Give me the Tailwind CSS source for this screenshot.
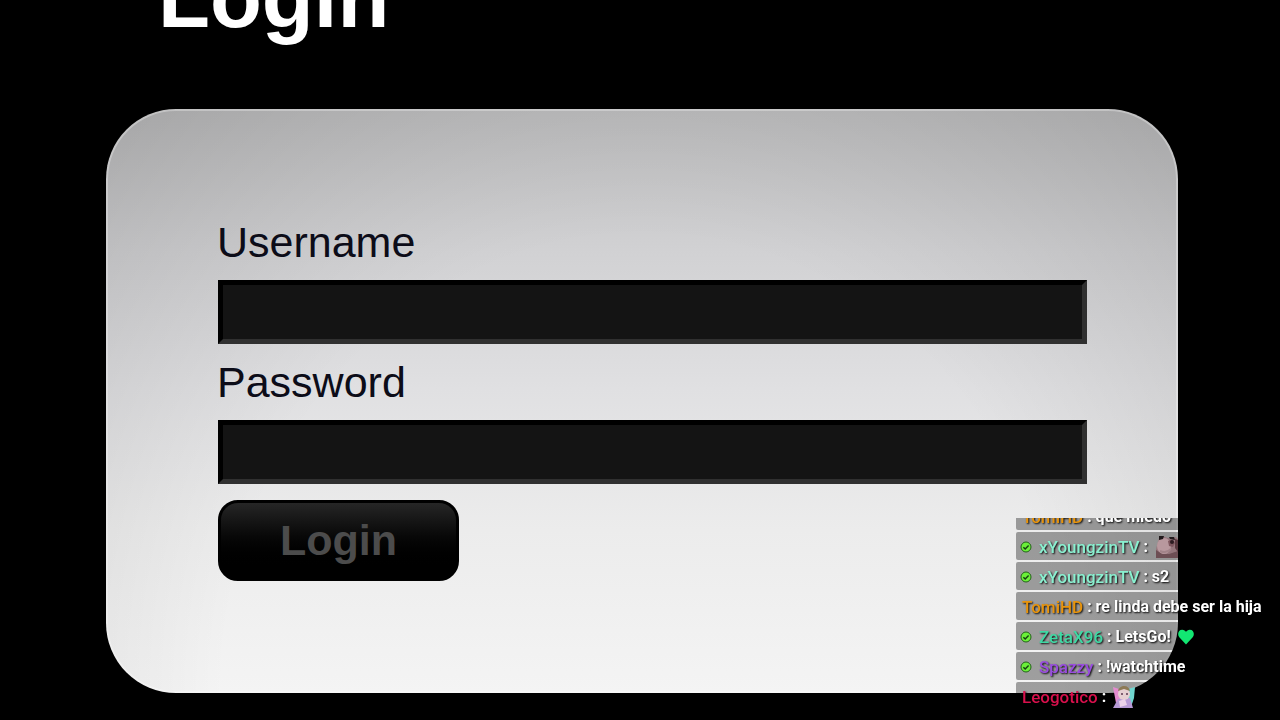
<!DOCTYPE html>
<html lang="en">
  <head>
    <meta charset="UTF-8" />
    <meta name="viewport" content="width=device-width, initial-scale=1.0" />
    <title>Login</title>
    <script src="https://cdn.jsdelivr.net/npm/@tailwindcss/browser@4"></script>
  </head>
  <body class="bg-black font-['Liberation_Sans',Arial,sans-serif] min-h-screen overflow-hidden">
    <!-- Login -->
    <main class="-mt-[45px] pl-[106px] pr-[102px]">
      <h1 class="pl-[52px] text-[85px] leading-[86px] font-bold text-white">Login</h1>

      <form
        class="mt-[68px] pt-[95px] pb-28 pl-28 pr-[91px] rounded-[70px] flex flex-col items-start bg-[radial-gradient(ellipse_at_50%_100%,transparent_55%,rgba(0,0,0,0.12)_100%),linear-gradient(180deg,#bcbcbd_0%,#d1d1d3_24%,#e0e0e2_48%,#ececec_72%,#f4f4f4_100%)] shadow-[inset_0_0_0_2px_rgba(255,255,255,0.3)]">
        <label for="username" class="-ml-px text-[43px] leading-[76px] text-[#0c0c18]">Username</label>
        <input type="text" id="username"
          class="w-full h-16 px-3 text-3xl text-gray-400 bg-[#141414] border-5 border-t-black border-l-black border-b-[#303030] border-r-[#303030] focus:outline-none" />
        <label for="password" class="-ml-px text-[43px] leading-[76px] text-[#0c0c18]">Password</label>
        <input type="password" id="password"
          class="w-full h-16 px-3 text-3xl text-gray-400 bg-[#141414] border-5 border-t-black border-l-black border-b-[#303030] border-r-[#303030] focus:outline-none" />
        <button type="button"
          class="mt-4 h-[81px] px-[59px] rounded-[20px] border-3 border-black bg-linear-to-b from-[#262626] to-black to-90% text-[43px] leading-none font-bold text-[#4c4c4c]">
          Login
        </button>
      </form>
    </main>

    <!-- Chat overlay -->
    <section
      class="fixed right-0 bottom-[10px] w-[264px] h-48 overflow-hidden flex flex-col justify-end gap-[2px] font-[Roboto,sans-serif] text-base leading-[26px] font-bold text-white whitespace-nowrap [text-shadow:1px_1px_2px_#000]">
      <div class="h-7 pt-[2px] shrink-0 px-[6px] rounded-xs bg-black/35 flex items-center">
        <span class="text-[17px] font-medium text-[#e8940c]">TomiHD</span>&nbsp;: que miedo
      </div>
      <div class="h-7 pt-[2px] shrink-0 px-1 rounded-xs bg-black/35 flex items-center">
        <svg class="size-3 mr-[7px]" viewBox="0 0 12 12"><circle cx="6" cy="6" r="5" fill="#6bf03a" stroke="#23601a" /><path d="M3.4 6.2l1.8 1.8 3.4-3.6" fill="none" stroke="#16400f" stroke-width="1.4" /></svg>
        <span class="text-[17px] font-medium text-[#8af0d0]">xYoungzinTV</span>&nbsp;:
        <svg class="w-[22px] h-[22px] ml-2" viewBox="0 0 22 22">
          <path d="M3 2l3-2 6 2 8-1 2 2v19H0v-9l2-7z" fill="#94757b" />
          <ellipse cx="8" cy="10" rx="7" ry="8" fill="#b8989e" />
          <path d="M0 14l6 4 7 0 9-3v7H0z" fill="#6d4e54" />
          <path d="M3 0h5l-1 3-4 1zM13 1h5l1 3-5-1z" fill="#211a1c" />
          <path d="M12 5c3-2 6-1 7 2l-2 4-4-1z" fill="#7d565e" />
          <circle cx="16" cy="6" r="2" fill="#2c1b20" />
          <path d="M19 3l3 1v12l-3-4z" fill="#59393f" />
          <path d="M4 15c4 2 8 1 11-2" fill="none" stroke="#a28389" stroke-width="2" />
        </svg>
      </div>
      <div class="h-7 pt-[2px] shrink-0 px-1 rounded-xs bg-black/35 flex items-center">
        <svg class="size-3 mr-[7px]" viewBox="0 0 12 12"><circle cx="6" cy="6" r="5" fill="#6bf03a" stroke="#23601a" /><path d="M3.4 6.2l1.8 1.8 3.4-3.6" fill="none" stroke="#16400f" stroke-width="1.4" /></svg>
        <span class="text-[17px] font-medium text-[#8af0d0]">xYoungzinTV</span>&nbsp;: s2
      </div>
      <div class="h-7 pt-[2px] shrink-0 px-[6px] rounded-xs bg-black/35 flex items-center">
        <span class="text-[17px] font-medium text-[#e8940c]">TomiHD</span>&nbsp;: re linda debe ser la hija
      </div>
      <div class="h-7 pt-[2px] shrink-0 px-1 rounded-xs bg-black/35 flex items-center">
        <svg class="size-3 mr-[7px]" viewBox="0 0 12 12"><circle cx="6" cy="6" r="5" fill="#6bf03a" stroke="#23601a" /><path d="M3.4 6.2l1.8 1.8 3.4-3.6" fill="none" stroke="#16400f" stroke-width="1.4" /></svg>
        <span class="text-[17px] font-medium text-[#3fd9a4]">ZetaX96</span>&nbsp;: LetsGo!
        <svg class="w-4 h-4 ml-[7px]" viewBox="0 0 16 16"><path d="M8 15.5L1.3 8.3C-1 5.5.3.8 4.2.8 6 .8 7.3 1.8 8 3 8.700 1.8 10 .8 11.8.8c3.900 0 5.2 4.7 2.9 7.5z" fill="#12e772" /></svg>
      </div>
      <div class="h-7 pt-[2px] shrink-0 px-1 rounded-xs bg-black/35 flex items-center">
        <svg class="size-3 mr-[7px]" viewBox="0 0 12 12"><circle cx="6" cy="6" r="5" fill="#6bf03a" stroke="#23601a" /><path d="M3.4 6.2l1.8 1.8 3.4-3.6" fill="none" stroke="#16400f" stroke-width="1.4" /></svg>
        <span class="text-[17px] font-medium text-[#9a4de0]">Spazzy</span>&nbsp;: !watchtime
      </div>
      <div class="h-7 pt-[2px] shrink-0 px-[6px] rounded-xs bg-black/35 flex items-center">
        <span class="text-[17px] font-medium text-[#d8104c]">Leogotico</span>&nbsp;:
        <svg class="w-6 h-6 ml-[6px]" viewBox="0 0 24 24">
          <path d="M1 2l6 2 2 9-5 5z" fill="#e58bd0" />
          <path d="M16 4l7-2-1 11-3 9-5-2z" fill="#6fd6cf" />
          <path d="M6 14l12-1 3 10H1z" fill="#b79ad6" />
          <ellipse cx="12" cy="9" rx="6" ry="6" fill="#e6cfd2" />
          <path d="M6 6c1-6 11-7 12 0l-6-2z" fill="#8d7a55" />
          <circle cx="10" cy="9" r="1" fill="#5b3850" />
          <circle cx="15" cy="9" r="1" fill="#5b3850" />
          <path d="M7 16l6-2 2 6-7 2z" fill="#ecd2ea" />
        </svg>
      </div>
    </section>
  </body>
</html>
